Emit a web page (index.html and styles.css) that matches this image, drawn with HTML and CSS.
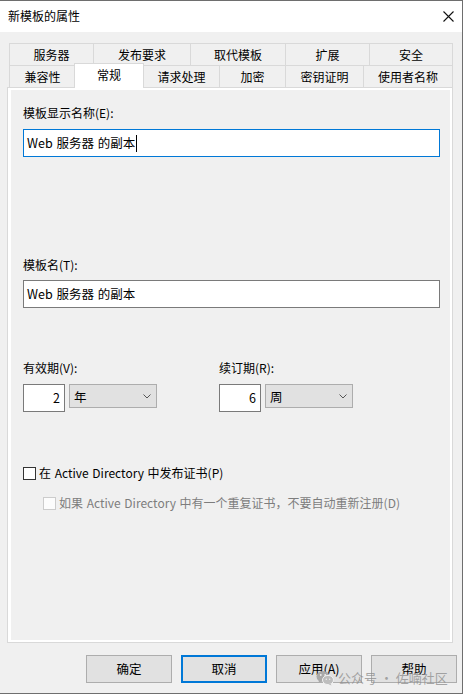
FILE: index.html
```html
<!DOCTYPE html>
<html lang="zh">
<head>
<meta charset="utf-8">
<title>新模板的属性</title>
<link rel="stylesheet" href="styles.css">
</head>
<body>
<div class="window">
  <div class="titlebar">
    <span class="title">新模板的属性</span>
    <svg class="close" width="11" height="11" viewBox="0 0 11 11"><path d="M0.5 0.5 L10.5 10.5 M10.5 0.5 L0.5 10.5" stroke="#111" stroke-width="1.1" fill="none"/></svg>
  </div>
  <div class="content">
    <div class="tabs">
      <div class="tabrow">
        <div class="tab w84">服务器</div>
        <div class="tab w97">发布要求</div>
        <div class="tab w95">取代模板</div>
        <div class="tab w84b">扩展</div>
        <div class="tab w83 last">安全</div>
      </div>
      <div class="tabrow">
        <div class="tab w66">兼容性</div>
        <div class="tab selected">常规</div>
        <div class="tab w76">请求处理</div>
        <div class="tab w66b">加密</div>
        <div class="tab w78">密钥证明</div>
        <div class="tab w89 last">使用者名称</div>
      </div>
    </div>
    <div class="panel">
      <div class="label">模板显示名称(E):</div>
      <div class="textbox focused"><span>Web 服务器 的副本</span><span class="caret"></span></div>
      <div class="label gap-large">模板名(T):</div>
      <div class="textbox second"><span>Web 服务器 的副本</span></div>
      <div class="periods">
        <div class="period">
          <div class="label">有效期(V):</div>
          <div class="period-controls">
            <div class="numbox">2</div>
            <div class="combo"><span>年</span><svg class="chev" width="8" height="5" viewBox="0 0 8 5"><path d="M0.5 0.5 L4 4 L7.5 0.5" stroke="#555" fill="none"/></svg></div>
          </div>
        </div>
        <div class="period">
          <div class="label">续订期(R):</div>
          <div class="period-controls">
            <div class="numbox">6</div>
            <div class="combo"><span>周</span><svg class="chev" width="8" height="5" viewBox="0 0 8 5"><path d="M0.5 0.5 L4 4 L7.5 0.5" stroke="#555" fill="none"/></svg></div>
          </div>
        </div>
      </div>
      <div class="check first"><span class="box"></span><span>在 Active Directory 中发布证书(P)</span></div>
      <div class="check sub disabled"><span class="box"></span><span>如果 Active Directory 中有一个重复证书，不要自动重新注册(D)</span></div>
    </div>
    <div class="buttons">
      <div class="btn">确定</div>
      <div class="btn default">取消</div>
      <div class="btn">应用(A)</div>
      <div class="btn">帮助</div>
    </div>
  </div>
  <div class="watermark">
    <svg width="18" height="16" viewBox="0 0 18 16"><ellipse cx="7" cy="6.5" rx="6.5" ry="5.5" fill="#a9a9a9"/><path d="M3 10.5 L2.5 13 L5.5 11.5Z" fill="#a9a9a9"/><ellipse cx="12" cy="10" rx="5.5" ry="4.6" fill="#bdbdbd" stroke="#f0f0f0" stroke-width="1"/><path d="M14.5 13.5 L15.5 15.5 L12.5 14.3Z" fill="#bdbdbd"/><circle cx="4.8" cy="5" r="0.9" fill="#f0f0f0"/><circle cx="9.2" cy="5" r="0.9" fill="#f0f0f0"/><circle cx="10.3" cy="9.3" r="0.7" fill="#f0f0f0"/><circle cx="13.7" cy="9.3" r="0.7" fill="#f0f0f0"/></svg>
    <span>公众号 · 佐喃社区</span>
  </div>
</div>
</body>
</html>
```

FILE: styles.css
```css
* { box-sizing: border-box; }
html, body { margin: 0; padding: 0; background: #ffffff; }
body {
  font-family: "Noto Sans CJK SC", "Noto Sans", sans-serif;
  font-size: 12px;
  color: #000;
}
.window {
  position: relative;
  width: 463px;
  height: 694px;
  border-top: 1px solid #6e6e6e;
  border-right: 1px solid #6e6e6e;
  border-bottom: 1px solid #6e6e6e;
  display: flex;
  flex-direction: column;
}
.titlebar {
  height: 31px;
  background: #fff;
  display: flex;
  align-items: center;
  justify-content: space-between;
  padding: 0 8px 0 8px;
}
.title { font-size: 12px; line-height: 16px; margin-top: -1px; }
.close { margin-top: -1px; }
.content {
  flex: 1;
  background: #f0f0f0;
  padding-top: 11px;
}
.tabs { margin-left: 9px; }
.tabrow { display: flex; height: 22px; }
.tab {
  height: 22px;
  border-top: 1px solid #d9d9d9;
  border-left: 1px solid #d9d9d9;
  background: #f0f0f0;
  display: flex;
  align-items: center;
  justify-content: center;
  line-height: 16px;
  font-size: 12px;
  flex: none;
}
.tab.last { border-right: 1px solid #d9d9d9; }
.w84 { width: 84px; }
.w97 { width: 97px; }
.w95 { width: 95px; }
.w84b { width: 84px; }
.w83 { width: 84px; }
.w66 { width: 66px; }
.w76 { width: 76px; }
.w66b { width: 66px; }
.w78 { width: 78px; }
.w89 { width: 90px; }
.tab.selected {
  position: relative;
  z-index: 2;
  width: 70px;
  height: 25px;
  margin: -2px -1px 0 -1px;
  background: #fff;
  border-right: 1px solid #d9d9d9;
  align-items: flex-start;
  padding-top: 3px;
}
.panel {
  margin-left: 7px;
  width: 446px;
  height: 556px;
  border: 1px solid #d9d9d9;
  box-shadow: inset 0 0 0 2px #fff, inset 3px 0 0 0 #fff;
  background: #f0f0f0;
  padding: 17px 0 0 15px;
}
.label { line-height: 16px; height: 16px; white-space: nowrap; }
.textbox {
  width: 417px;
  height: 28px;
  margin-top: 8px;
  background: #fff;
  border: 1px solid #7a7a7a;
  padding-left: 3px;
  display: flex;
  align-items: center;
  line-height: 16px;
  font-size: 12.5px;
  word-spacing: 1px;
}
.textbox.focused { border-color: #0078d7; }
.caret { width: 1px; height: 17px; background: #000; margin-left: 1px; }
.gap-large { margin-top: 100px; }
.textbox.second { margin-top: 7px; }
.periods {
  display: grid;
  grid-template-columns: 196px 200px;
  margin-top: 52px;
}
.period-controls { display: flex; gap: 4px; margin-top: 8px; align-items: flex-start; }
.numbox {
  width: 42px;
  height: 28px;
  background: #fff;
  border: 1px solid #7a7a7a;
  text-align: right;
  padding-right: 4px;
  line-height: 26px;
  font-size: 12.5px;
}
.combo {
  width: 88px;
  height: 24px;
  background: #e1e1e1;
  border: 1px solid #adadad;
  display: flex;
  align-items: center;
  justify-content: space-between;
  padding: 0 4px 0 4px;
  font-size: 12.5px;
}
.chev { margin-right: 1px; }
.check {
  display: flex;
  align-items: center;
  gap: 3px;
  line-height: 16px;
  height: 16px;
  white-space: nowrap;
  font-size: 12px;
  word-spacing: 1px;
}
.check.first { margin-top: 53px; }
.check.sub { margin-top: 14px; margin-left: 20px; }
.box {
  width: 13px;
  height: 13px;
  border: 1px solid #333;
  background: #fff;
  flex: none;
}
.disabled { color: #7d7d7d; }
.disabled .box { border-color: #cccccc; background: #fcfcfc; }
.buttons {
  display: flex;
  gap: 9px;
  margin: 12px 0 0 86px;
}
.btn {
  width: 86px;
  height: 28px;
  background: #e1e1e1;
  border: 1px solid #adadad;
  display: flex;
  align-items: center;
  justify-content: center;
  font-size: 12.5px;
  line-height: 16px;
}
.btn.default { border: 2px solid #0078d7; }
.watermark {
  position: absolute;
  left: 316px;
  top: 669px;
  display: flex;
  align-items: center;
  gap: 4px;
  color: rgba(140, 140, 140, 0.75);
  font-size: 13px;
  line-height: 16px;
  pointer-events: none;
  white-space: nowrap;
}
```
